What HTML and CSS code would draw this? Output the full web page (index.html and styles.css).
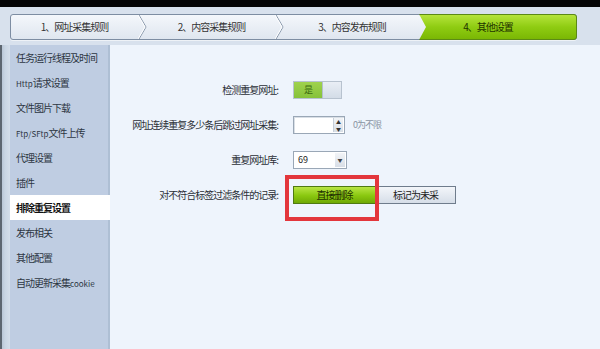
FILE: index.html
```html
<!DOCTYPE html>
<html lang="zh-CN">
<head>
    <meta charset="UTF-8">
    <title>其他设置</title>
    <link rel="stylesheet" href="styles.css">
</head>
<body>

<div class="titlebar"></div>

<div class="frame">
    <div class="steps">
        <div class="step">1、网址采集规则</div>
        <svg class="sep" width="10" height="24" viewBox="0 0 10 24"><polyline points="1,0 8,12 1,24" fill="none" stroke="#8594a8" stroke-width="1"/><polyline points="0,0 7,12 0,24" fill="none" stroke="#ffffff" stroke-width="1"/></svg>
        <div class="step">2、内容采集规则</div>
        <svg class="sep" width="10" height="24" viewBox="0 0 10 24"><polyline points="1,0 8,12 1,24" fill="none" stroke="#8594a8" stroke-width="1"/><polyline points="0,0 7,12 0,24" fill="none" stroke="#ffffff" stroke-width="1"/></svg>
        <div class="step">3、内容发布规则</div>
        <div class="step step-active">4、其他设置</div>
    </div>

    <div class="content">
        <div class="edge"></div>
        <ul class="sidebar">
            <li>任务运行线程及时间</li>
            <li><span class="latin">Http</span>请求设置</li>
            <li>文件图片下载</li>
            <li><span class="latin">Ftp/SFtp</span>文件上传</li>
            <li>代理设置</li>
            <li>插件</li>
            <li class="selected">排除重复设置</li>
            <li>发布相关</li>
            <li>其他配置</li>
            <li>自动更新采集<span class="latin">cookie</span></li>
        </ul>

        <div class="main">
            <div class="form">
                <div class="label">检测重复网址:</div>
                <div class="field">
                    <div class="toggle"><span class="on">是</span><span class="off"></span></div>
                </div>

                <div class="label">网址连续重复多少条后跳过网址采集:</div>
                <div class="field">
                    <div class="spinner">
                        <span class="spin-btns"><i>▲</i><i>▼</i></span>
                    </div>
                    <span class="hint">0为不限</span>
                </div>

                <div class="label">重复网址库:</div>
                <div class="field">
                    <div class="select">69<span class="drop">▼</span></div>
                </div>

                <div class="label">对不符合标签过滤条件的记录:</div>
                <div class="field">
                    <div class="choice">
                        <button class="btn btn-green">直接删除</button>
                        <button class="btn btn-gray">标记为未采</button>
                        <div class="highlight"></div>
                    </div>
                </div>
            </div>
        </div>
    </div>
</div>

</body>
</html>
```

FILE: styles.css
```css
html, body {
    margin: 0;
    padding: 0;
    height: 100%;
}
body {
    font-family: "Noto Sans CJK SC", "DejaVu Sans", sans-serif;
    font-size: 10px;
    letter-spacing: -1px;
    color: #2b2f36;
    background-color: #d6e0ec;
    overflow: hidden;
}
.titlebar {
    height: 7px;
    background-color: #050505;
}
.frame {
    display: flex;
    flex-direction: column;
    height: 342px;
    background-color: #d8e1ed;
}

/* Step bar */
.steps {
    display: flex;
    align-items: stretch;
    margin: 7px 23px 0 10px;
    height: 24px;
    border: 1px solid #7d8da2;
    border-radius: 3px;
    background: linear-gradient(#f4f7fb, #dfe6ef);
    box-shadow: 0 1px 0 #eef2f7;
}
.step {
    width: 127px;
    line-height: 24px;
    text-align: center;
    color: #333;
}
.sep {
    flex: none;
    display: block;
}
.step:nth-child(5) {
    width: 134px;
}
.step-active {
    flex: 1;
    margin: -1px -1px -1px 0;
    border: 1px solid #5c8a16;
    border-radius: 0 3px 3px 0;
    background: linear-gradient(#b5e43b, #8fcc12 50%, #7ab704);
    color: #1e3300;
    clip-path: polygon(0 0, 100% 0, 100% 100%, 0 100%, 7px 50%);
    padding-right: 20px;
}

/* Body */
.content {
    display: flex;
    flex: 1;
    margin-top: 5px;
}
.edge {
    width: 10px;
    background: linear-gradient(90deg, #5d6670 0, #5d6670 2px, #b9c6d6 2px, #c9d5e3 5px, #d4deea 10px);
}
.sidebar {
    list-style: none;
    margin: 0;
    padding: 0;
    width: 98px;
    background-color: #bfcde2;
    border-right: 2px solid #aebfd4;
}
.sidebar li {
    height: 25px;
    line-height: 25px;
    padding-left: 6px;
    white-space: nowrap;
    color: #2d3642;
}
.latin {
    font-size: 8px;
    letter-spacing: 0;
}
.sidebar li.selected {
    background-color: #ffffff;
    font-weight: bold;
    color: #111;
    margin-right: -2px;
}
.main {
    flex: 1;
    background-color: #eef4fc;
}

/* Form */
.form {
    display: grid;
    grid-template-columns: 168px auto;
    grid-auto-rows: 35px;
    column-gap: 15px;
    padding-top: 27px;
    align-items: center;
}
.label {
    text-align: right;
    white-space: nowrap;
}
.field {
    display: flex;
    align-items: center;
}
.toggle {
    display: flex;
    width: 47px;
    height: 16px;
    border: 1px solid #b7c2cf;
}
.toggle .on {
    width: 28px;
    background: linear-gradient(#9fd24d, #86c23a);
    color: #3a6a10;
    text-align: center;
    line-height: 16px;
    font-size: 9px;
}
.toggle .off {
    flex: 1;
    background: linear-gradient(#e9eef5, #d3dce7);
    border-left: 1px solid #b3bfcd;
}
.spinner {
    position: relative;
    width: 50px;
    height: 16px;
    border: 1px solid #9aa7b6;
    background-color: #ffffff;
    box-shadow: inset 1px 1px 0 #d9dfe6;
}
.spin-btns {
    position: absolute;
    right: 1px;
    top: 1px;
    bottom: 1px;
    width: 9px;
    display: flex;
    flex-direction: column;
    background: linear-gradient(#f2f4f7, #d8dee6);
    border-left: 1px solid #c6ced8;
}
.spin-btns i {
    flex: 1;
    font-style: normal;
    font-size: 5px;
    line-height: 7px;
    text-align: center;
    letter-spacing: 0;
    color: #333;
}
.hint {
    margin-left: 8px;
    color: #8a95a3;
    font-size: 9px;
}
.select {
    position: relative;
    width: 48px;
    height: 16px;
    padding-left: 4px;
    border: 1px solid #9aa7b6;
    background-color: #ffffff;
    line-height: 16px;
    font-size: 9px;
    letter-spacing: 0;
    color: #222;
}
.drop {
    position: absolute;
    right: 1px;
    top: 1px;
    bottom: 1px;
    width: 10px;
    background: linear-gradient(#f2f4f7, #d8dee6);
    font-size: 5px;
    line-height: 14px;
    text-align: center;
    color: #444;
}
.choice {
    position: relative;
    display: flex;
}
.btn {
    height: 18px;
    padding: 0;
    font-family: inherit;
    font-size: 10px;
    letter-spacing: -1px;
    line-height: 16px;
    cursor: pointer;
}
.btn-green {
    width: 83px;
    border: 1px solid #4f7a12;
    background: linear-gradient(#b8e544, #89c70f 55%, #6fa905);
    color: #1b2d00;
}
.btn-gray {
    width: 81px;
    margin-left: -1px;
    border: 1px solid #6f7c8c;
    background: linear-gradient(#f3f6fa, #d6dee8);
    color: #222;
}
.highlight {
    position: absolute;
    left: -8px;
    top: -11px;
    width: 86px;
    height: 38px;
    border: 4px solid #e3363c;
    pointer-events: none;
}
```
